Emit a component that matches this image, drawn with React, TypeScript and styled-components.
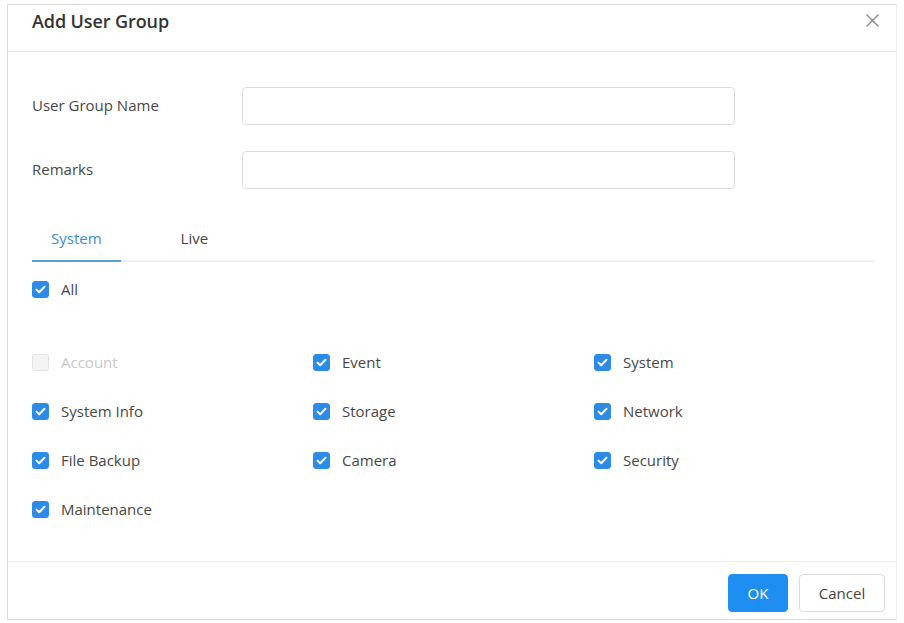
import React from "react";
import styled, { createGlobalStyle } from "styled-components";

const Global = createGlobalStyle`
  html, body { margin: 0; padding: 0; background: #ffffff; }
  body { font-family: "Open Sans", "Noto Sans", "Liberation Sans", sans-serif; color: #3a3a3a; }
  * { box-sizing: border-box; }
`;

const Page = styled.div`
  padding: 4px 0 0 7px;
`;

const Dialog = styled.div`
  width: 890px;
  height: 616px;
  border: 1px solid #d9d9d9;
  border-right-color: #ececec;
  background: #fff;
  display: flex;
  flex-direction: column;
`;

const Header = styled.div`
  height: 47px;
  flex: none;
  display: flex;
  align-items: flex-start;
  justify-content: space-between;
  padding: 3px 15px 0 24px;
  border-bottom: 1px solid #e8e8e8;
`;

const Title = styled.div`
  font-size: 18px;
  line-height: 26px;
  font-weight: 600;
  color: #333;
  letter-spacing: -0.1px;
`;

const Close = styled.button`
  border: none;
  background: none;
  padding: 0;
  margin-top: 3px;
  width: 18px;
  height: 18px;
  display: flex;
  align-items: center;
  justify-content: center;
  color: #8a8a8a;
  cursor: pointer;
`;

const Body = styled.div`
  flex: 1;
  padding: 35px 22px 0 24px;
  display: flex;
  flex-direction: column;
`;

const FormRow = styled.div`
  display: flex;
  align-items: center;
  height: 38px;
  margin-bottom: 26px;
`;

const Label = styled.div`
  width: 210px;
  font-size: 15px;
  color: #474747;
  margin-top: -2px;
`;

const Input = styled.input`
  width: 493px;
  height: 38px;
  border: 1px solid #dcdcdc;
  border-radius: 4px;
  outline: none;
  font-size: 14px;
  padding: 0 10px;
`;

const Tabs = styled.div`
  display: flex;
  margin-top: 2px;
  border-bottom: 2px solid #f0f0f0;
`;

const Tab = styled.div<{ $active?: boolean }>`
  height: 45px;
  padding: 0 19px 1px;
  margin-right: 41px;
  margin-bottom: -2px;
  display: flex;
  align-items: center;
  font-size: 15px;
  color: ${(p) => (p.$active ? "#3b8dcc" : "#444")};
  border-bottom: 2px solid ${(p) => (p.$active ? "#5a9fd4" : "transparent")};
`;

const AllRow = styled.div`
  margin-top: 14px;
  margin-bottom: 47px;
`;

const Grid = styled.div`
  display: grid;
  grid-template-columns: 281px 281px 281px;
  row-gap: 23px;
`;

const Item = styled.label<{ $disabled?: boolean }>`
  display: flex;
  align-items: center;
  gap: 12px;
  height: 26px;
  font-size: 15px;
  color: ${(p) => (p.$disabled ? "#c8c8c8" : "#474747")};
`;

const Box = styled.span<{ $checked?: boolean }>`
  width: 17px;
  height: 17px;
  border-radius: 3px;
  flex: none;
  display: flex;
  align-items: center;
  justify-content: center;
  background: ${(p) => (p.$checked ? "#2b8be6" : "#f4f4f4")};
  border: 1px solid ${(p) => (p.$checked ? "#2b8be6" : "#e2e2e2")};
`;

const Footer = styled.div`
  height: 58px;
  flex: none;
  border-top: 1px solid #ececec;
  display: flex;
  justify-content: flex-end;
  align-items: flex-start;
  padding: 12px 11px 0 0;
  gap: 11px;
`;

const Button = styled.button<{ $primary?: boolean }>`
  height: 38px;
  border-radius: 4px;
  font-family: inherit;
  font-size: 15px;
  cursor: pointer;
  padding: 0;
  width: ${(p) => (p.$primary ? "60px" : "86px")};
  background: ${(p) => (p.$primary ? "#1e8ef2" : "#fff")};
  color: ${(p) => (p.$primary ? "#fff" : "#444")};
  border: 1px solid ${(p) => (p.$primary ? "#1e8ef2" : "#dcdcdc")};
`;

const Check = () => (
  <svg width="11" height="9" viewBox="0 0 11 9">
    <path d="M1.5 4.6 L4.2 7.2 L9.5 1.8" fill="none" stroke="#fff" strokeWidth="2" strokeLinecap="round" strokeLinejoin="round" />
  </svg>
);

const CheckItem = ({ label, checked = true, disabled = false }: { label: string; checked?: boolean; disabled?: boolean }) => (
  <Item $disabled={disabled}>
    <Box $checked={checked}>{checked && <Check />}</Box>
    {label}
  </Item>
);

const items: { label: string; checked?: boolean; disabled?: boolean }[] = [
  { label: "Account", checked: false, disabled: true },
  { label: "Event" },
  { label: "System" },
  { label: "System Info" },
  { label: "Storage" },
  { label: "Network" },
  { label: "File Backup" },
  { label: "Camera" },
  { label: "Security" },
  { label: "Maintenance" },
];

export default function App() {
  return (
    <>
      <Global />
      <Page>
        <Dialog>
          <Header>
            <Title>Add User Group</Title>
            <Close aria-label="close">
              <svg width="15" height="15" viewBox="0 0 15 15">
                <path d="M1.5 1.5 L13.5 13.5 M13.5 1.5 L1.5 13.5" stroke="#8a8a8a" strokeWidth="1.4" />
              </svg>
            </Close>
          </Header>
          <Body>
            <FormRow>
              <Label>User Group Name</Label>
              <Input />
            </FormRow>
            <FormRow>
              <Label>Remarks</Label>
              <Input />
            </FormRow>
            <Tabs>
              <Tab $active>System</Tab>
              <Tab>Live</Tab>
            </Tabs>
            <AllRow>
              <CheckItem label="All" />
            </AllRow>
            <Grid>
              {items.map((it) => (
                <CheckItem key={it.label} {...it} />
              ))}
            </Grid>
          </Body>
          <Footer>
            <Button $primary>OK</Button>
            <Button>Cancel</Button>
          </Footer>
        </Dialog>
      </Page>
    </>
  );
}
